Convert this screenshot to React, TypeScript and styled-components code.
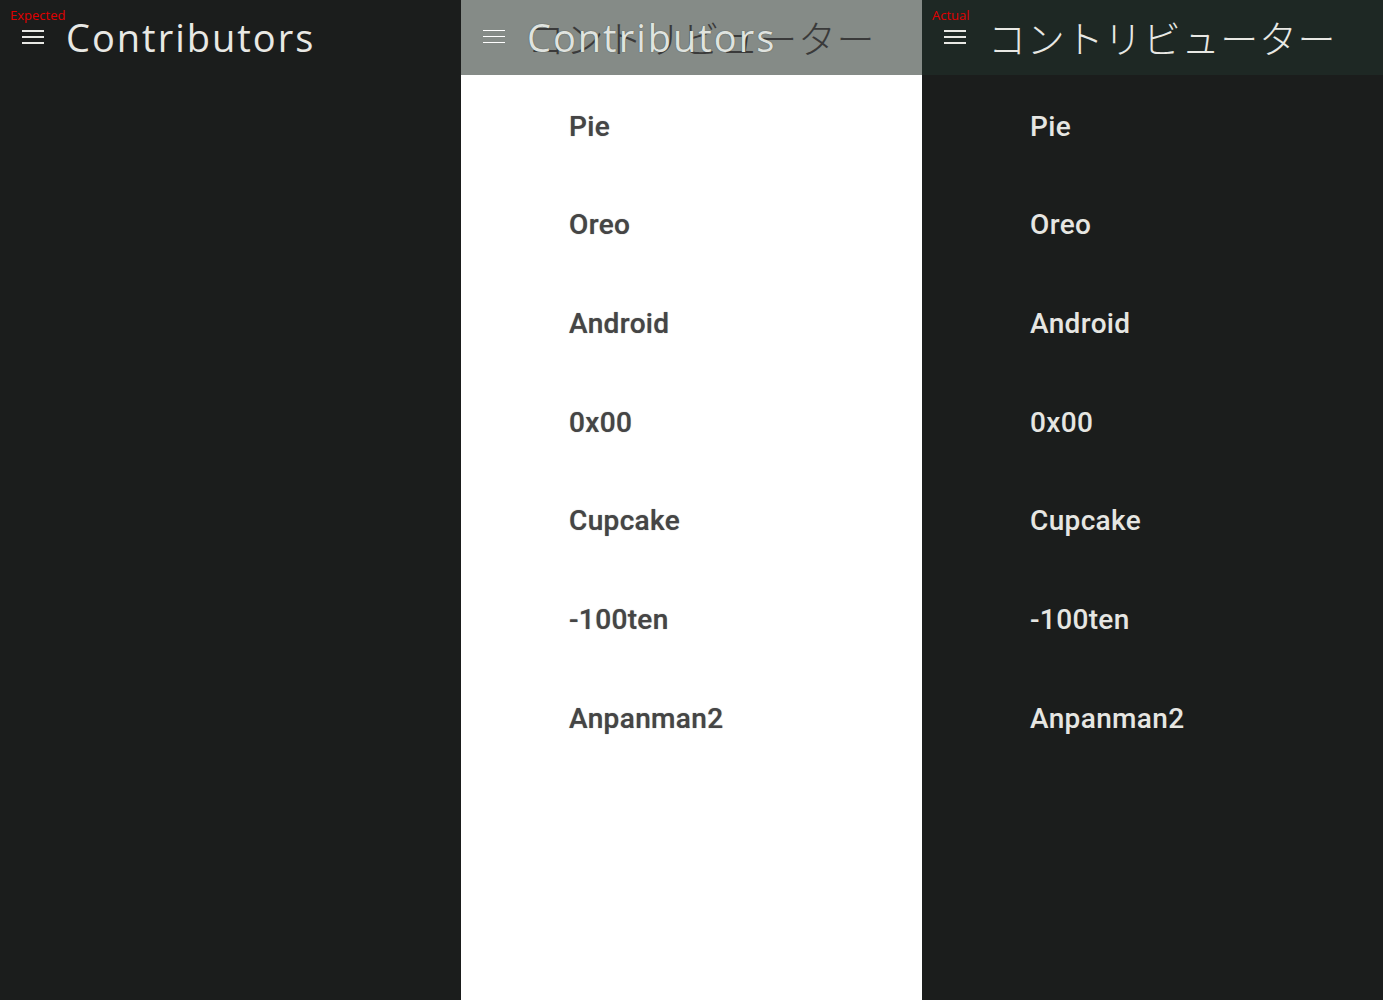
import React from "react";
import styled, { createGlobalStyle } from "styled-components";

const GlobalStyle = createGlobalStyle`
  html, body {
    margin: 0;
    padding: 0;
    background: #1b1d1c;
  }
  * {
    box-sizing: border-box;
  }
`;

const items = ["Pie", "Oreo", "Android", "0x00", "Cupcake", "-100ten", "Anpanman2"];

type Variant = "expected" | "diff" | "actual";

const Page = styled.div`
  display: flex;
  width: 1383px;
  height: 1000px;
  overflow: hidden;
`;

const Panel = styled.div<{ $variant: Variant }>`
  position: relative;
  width: 461px;
  height: 1000px;
  display: flex;
  flex-direction: column;
  background: ${(p) => (p.$variant === "diff" ? "#ffffff" : "#1b1d1c")};
`;

const Label = styled.span`
  position: absolute;
  top: 7px;
  left: 10px;
  font-family: "Open Sans", "Liberation Sans", sans-serif;
  font-size: 13px;
  line-height: 17px;
  color: #e00000;
`;

const headerBg: Record<Variant, string> = {
  expected: "#1b1d1c",
  diff: "#858b87",
  actual: "#1e2824",
};

const Header = styled.header<{ $variant: Variant }>`
  height: 75px;
  flex-shrink: 0;
  display: flex;
  align-items: center;
  padding-left: 22px;
  padding-bottom: 1px;
  background: ${(p) => headerBg[p.$variant]};
`;

const Menu = styled.div<{ $thin?: boolean }>`
  width: 22px;
  display: flex;
  flex-direction: column;
  gap: ${(p) => (p.$thin ? "5px" : "4px")};
  margin-top: -1px;
  span {
    display: block;
    height: ${(p) => (p.$thin ? "1px" : "2px")};
    background: ${(p) => (p.$thin ? "#ffffff" : "#e8e8e4")};
  }
`;

const TitleWrap = styled.div`
  position: relative;
  margin-left: 22px;
  display: flex;
  align-items: center;
  height: 50px;
`;

const TitleLatin = styled.h1<{ $diff?: boolean }>`
  margin: 0;
  font-family: "Open Sans", "Liberation Sans", sans-serif;
  font-weight: 400;
  font-size: 38px;
  letter-spacing: 2px;
  line-height: 50px;
  color: ${(p) => (p.$diff ? "#dfe3df" : "#e8e8e4")};
  text-shadow: ${(p) => (p.$diff ? "0 0 1px #3a3a3a" : "none")};
  white-space: nowrap;
`;

const TitleJa = styled.h1<{ $diff?: boolean }>`
  margin: 0;
  font-family: "Noto Sans CJK JP", "Noto Sans", sans-serif;
  font-weight: 300;
  font-size: 38px;
  letter-spacing: 0.7px;
  line-height: 50px;
  color: ${(p) => (p.$diff ? "#3a3a3a" : "#e8e8e4")};
  white-space: nowrap;
`;

const OverlayJa = styled(TitleJa)`
  position: absolute;
  left: 0;
  top: 0;
  z-index: 0;
`;

const OverlayLatin = styled(TitleLatin)`
  position: relative;
  z-index: 1;
`;

const List = styled.ul`
  list-style: none;
  margin: 0;
  padding: 2px 0 0 0;
`;

const Row = styled.li<{ $variant: Variant }>`
  height: 98.67px;
  display: flex;
  align-items: center;
  padding-left: 108px;
  font-family: Roboto, "Liberation Sans", sans-serif;
  font-weight: 500;
  font-size: 28px;
  letter-spacing: 0.35px;
  color: ${(p) => (p.$variant === "diff" ? "#454545" : "#e6e6e2")};
  text-shadow: ${(p) => (p.$variant === "diff" ? "0 0 1px #8a8a8a" : "none")};
`;

function MenuIcon({ thin }: { thin?: boolean }) {
  return (
    <Menu $thin={thin}>
      <span />
      <span />
      <span />
    </Menu>
  );
}

export default function App() {
  return (
    <Page>
      <GlobalStyle />
      <Panel $variant="expected">
        <Label>Expected</Label>
        <Header $variant="expected">
          <MenuIcon />
          <TitleWrap>
            <TitleLatin>Contributors</TitleLatin>
          </TitleWrap>
        </Header>
      </Panel>

      <Panel $variant="diff">
        <Header $variant="diff">
          <MenuIcon thin />
          <TitleWrap>
            <OverlayJa $diff>コントリビューター</OverlayJa>
            <OverlayLatin $diff>Contributors</OverlayLatin>
          </TitleWrap>
        </Header>
        <List>
          {items.map((name) => (
            <Row key={name} $variant="diff">
              {name}
            </Row>
          ))}
        </List>
      </Panel>

      <Panel $variant="actual">
        <Label>Actual</Label>
        <Header $variant="actual">
          <MenuIcon />
          <TitleWrap>
            <TitleJa>コントリビューター</TitleJa>
          </TitleWrap>
        </Header>
        <List>
          {items.map((name) => (
            <Row key={name} $variant="actual">
              {name}
            </Row>
          ))}
        </List>
      </Panel>
    </Page>
  );
}
